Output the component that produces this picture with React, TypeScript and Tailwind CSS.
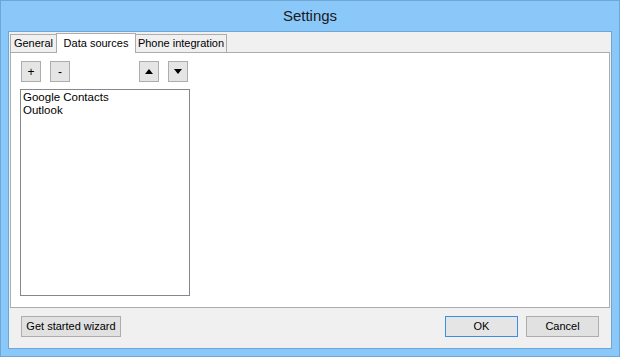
import React from 'react';

const font = { fontFamily: '"Segoe UI", "Liberation Sans", Arial, sans-serif' };

function SmallButton({ children }: { children: React.ReactNode }) {
  return (
    <button className="w-[20px] h-[21px] border border-[#adadad] bg-[#e5e5e5] flex items-center justify-center text-[12px] text-black leading-none">
      {children}
    </button>
  );
}

export default function App() {
  return (
    <div className="w-[620px] h-[357px] bg-[#8bc8fa] border border-[#6fa6d8] flex flex-col text-[11px] text-black" style={font}>
      {/* title bar */}
      <div className="h-[30px] flex items-center justify-center text-[15px] text-[#1a1a1a] shrink-0 pt-[1px]">Settings</div>

      {/* client area */}
      <div className="mx-[7px] mb-[7px] flex-1 bg-[#f0f0f0] border border-[#6fa6d8] flex flex-col">
        {/* tab strip */}
        <div className="h-[20px] px-[1px] flex items-end shrink-0">
          <div className="w-[47px] h-[18px] border border-b-0 border-[#acacac] bg-[#f0f0f0] flex items-center justify-center">General</div>
          <div className="w-[80px] h-[20px] border border-b-0 border-[#acacac] bg-white flex items-start justify-center pt-[1px] -ml-[1px] relative z-10 -mb-[1px]">Data sources</div>
          <div className="w-[92px] h-[18px] border border-b-0 border-[#acacac] bg-[#f0f0f0] flex items-center justify-center -ml-[1px]">Phone integration</div>
        </div>

        {/* tab page */}
        <div className="mx-[1px] h-[256px] bg-white border border-[#acacac] shrink-0 pl-[10px] pt-[8px]">
          <div className="flex items-center h-[21px]">
            <SmallButton>+</SmallButton>
            <div className="ml-[9px]"><SmallButton>-</SmallButton></div>
            <div className="ml-[69px]">
              <SmallButton>
                <svg width="8" height="5" viewBox="0 0 8 5"><path d="M0 5 L4 0 L8 5 Z" fill="#000" /></svg>
              </SmallButton>
            </div>
            <div className="ml-[9px]">
              <SmallButton>
                <svg width="8" height="5" viewBox="0 0 8 5"><path d="M0 0 L8 0 L4 5 Z" fill="#000" /></svg>
              </SmallButton>
            </div>
          </div>
          <div className="mt-[7px] -ml-[1px] w-[170px] h-[207px] border border-[#828790] px-[2px] pt-[1px] leading-[13px] text-[11.5px]">
            <div>Google Contacts</div>
            <div>Outlook</div>
          </div>
        </div>

        {/* bottom buttons */}
        <div className="flex items-start pt-[8px] pl-[12px] pr-[12px]">
          <button className="w-[100px] h-[21px] border border-[#adadad] bg-[#e1e1e1]">Get started wizard</button>
          <div className="flex-1" />
          <button className="w-[73px] h-[21px] border border-[#3c8fe0] bg-[#e5e5e5]">OK</button>
          <button className="ml-[8px] w-[73px] h-[21px] border border-[#adadad] bg-[#e1e1e1]">Cancel</button>
        </div>
      </div>
    </div>
  );
}
